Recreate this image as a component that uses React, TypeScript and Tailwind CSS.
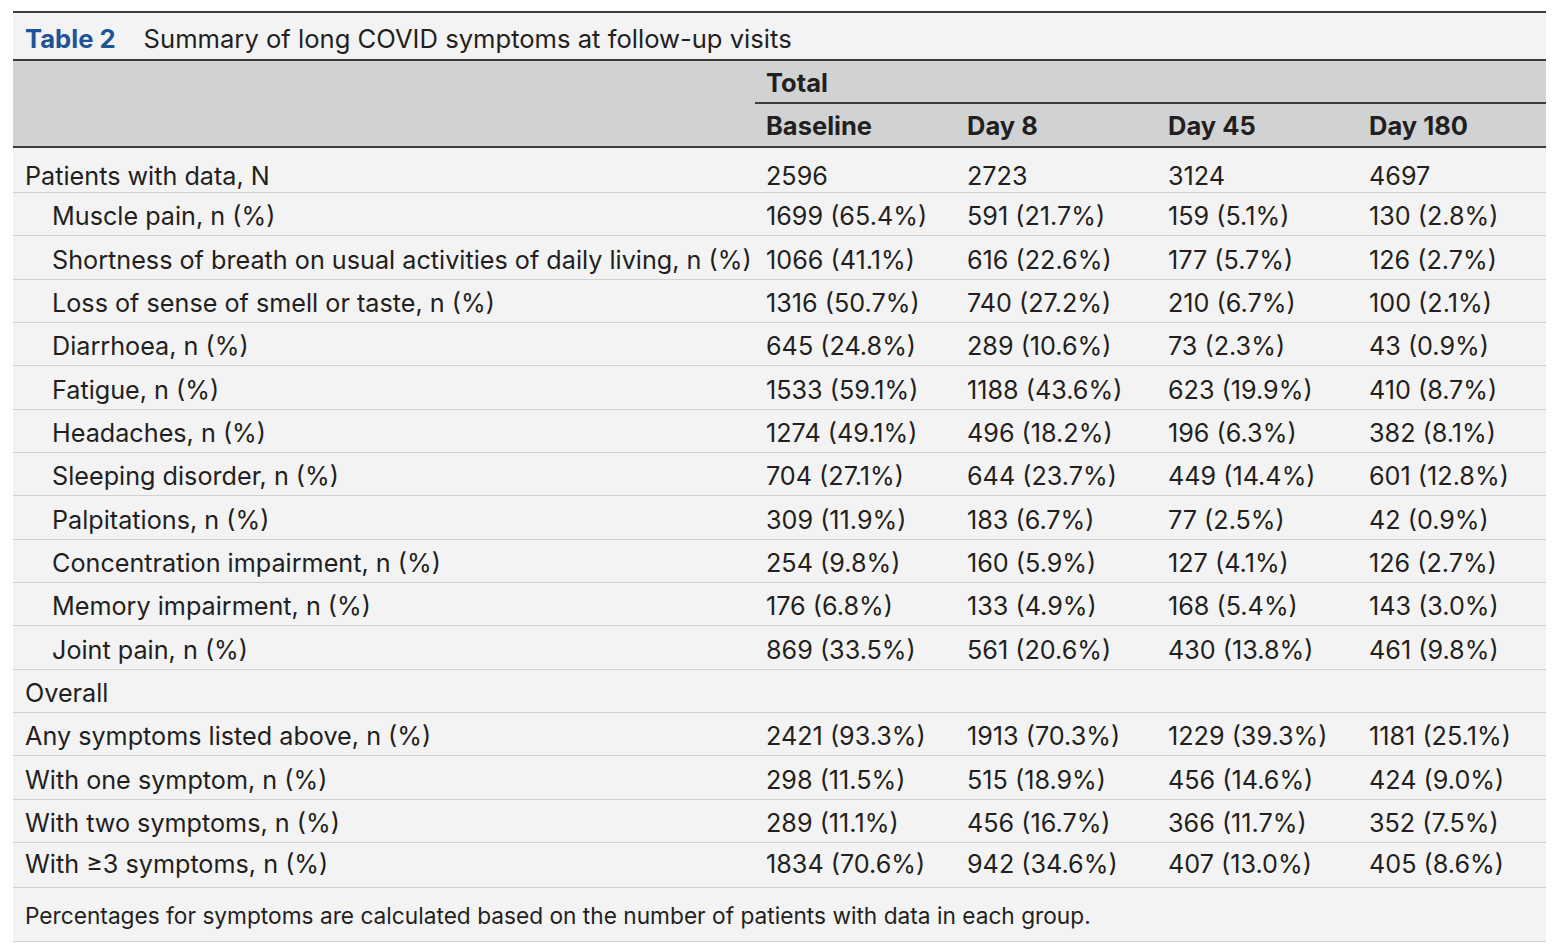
import React from 'react';

type Row = { label: string; values: string[]; indent?: boolean };

const rows: Row[] = [
  { label: 'Patients with data, N', values: ['2596', '2723', '3124', '4697'] },
  { label: 'Muscle pain, n (%)', values: ['1699 (65.4%)', '591 (21.7%)', '159 (5.1%)', '130 (2.8%)'], indent: true },
  { label: 'Shortness of breath on usual activities of daily living, n (%)', values: ['1066 (41.1%)', '616 (22.6%)', '177 (5.7%)', '126 (2.7%)'], indent: true },
  { label: 'Loss of sense of smell or taste, n (%)', values: ['1316 (50.7%)', '740 (27.2%)', '210 (6.7%)', '100 (2.1%)'], indent: true },
  { label: 'Diarrhoea, n (%)', values: ['645 (24.8%)', '289 (10.6%)', '73 (2.3%)', '43 (0.9%)'], indent: true },
  { label: 'Fatigue, n (%)', values: ['1533 (59.1%)', '1188 (43.6%)', '623 (19.9%)', '410 (8.7%)'], indent: true },
  { label: 'Headaches, n (%)', values: ['1274 (49.1%)', '496 (18.2%)', '196 (6.3%)', '382 (8.1%)'], indent: true },
  { label: 'Sleeping disorder, n (%)', values: ['704 (27.1%)', '644 (23.7%)', '449 (14.4%)', '601 (12.8%)'], indent: true },
  { label: 'Palpitations, n (%)', values: ['309 (11.9%)', '183 (6.7%)', '77 (2.5%)', '42 (0.9%)'], indent: true },
  { label: 'Concentration impairment, n (%)', values: ['254 (9.8%)', '160 (5.9%)', '127 (4.1%)', '126 (2.7%)'], indent: true },
  { label: 'Memory impairment, n (%)', values: ['176 (6.8%)', '133 (4.9%)', '168 (5.4%)', '143 (3.0%)'], indent: true },
  { label: 'Joint pain, n (%)', values: ['869 (33.5%)', '561 (20.6%)', '430 (13.8%)', '461 (9.8%)'], indent: true },
  { label: 'Overall', values: ['', '', '', ''] },
  { label: 'Any symptoms listed above, n (%)', values: ['2421 (93.3%)', '1913 (70.3%)', '1229 (39.3%)', '1181 (25.1%)'] },
  { label: 'With one symptom, n (%)', values: ['298 (11.5%)', '515 (18.9%)', '456 (14.6%)', '424 (9.0%)'] },
  { label: 'With two symptoms, n (%)', values: ['289 (11.1%)', '456 (16.7%)', '366 (11.7%)', '352 (7.5%)'] },
  { label: 'With \u22653 symptoms, n (%)', values: ['1834 (70.6%)', '942 (34.6%)', '407 (13.0%)', '405 (8.6%)'] },
];

const cols = ['Baseline', 'Day 8', 'Day 45', 'Day 180'];

export default function App() {
  return (
    <div className="min-h-screen bg-white pt-[11px] pl-[13px] pr-[10px] text-[#231f20]" style={{ fontFamily: 'Inter, "Liberation Sans", Arial, sans-serif' }}>
      <div className="bg-[#f3f3f3] border-t-2 border-[#3c3c3c]">
        {/* Caption */}
        <div className="h-[48px] flex items-center pl-[12px] pt-[7px] text-[25.6px] border-b-2 border-[#3c3c3c]">
          <span className="font-bold text-[#1d5497]">Table 2</span>
          <span className="ml-[28px]">Summary of long COVID symptoms at follow-up visits</span>
        </div>

        {/* Header */}
        <div className="bg-[#d1d2d4] flex border-b-2 border-[#3c3c3c]">
          <div className="w-[742px] shrink-0" />
          <div className="flex-1">
            <div className="h-[43px] flex items-center pl-[11px] pt-[4px] text-[25.5px] font-bold border-b-2 border-[#3c3c3c]">
              Total
            </div>
            <div className="h-[42px] flex items-center pt-[2px] text-[25.5px] font-bold">
              {cols.map((c, j) => (
                <div key={c} className={`${j === 3 ? 'flex-1' : 'w-[201px] shrink-0'} pl-[11px]`}>{c}</div>
              ))}
            </div>
          </div>
        </div>

        {/* Body */}
        {rows.map((r, i) => (
          <div
            key={r.label}
            className={`flex items-center text-[25.2px] border-b border-[#d0d0d0] ${i === 0 ? 'h-[45px] pt-[13px]' : i === rows.length - 1 ? 'h-[45px]' : 'h-[43.33px] pt-[6px]'}`}
          >
            <div className={`w-[742px] shrink-0 whitespace-nowrap ${r.indent ? 'pl-[39px]' : 'pl-[12px]'}`}>{r.label}</div>
            {r.values.map((v, j) => (
              <div key={j} className={`${j === 3 ? 'flex-1' : 'w-[201px] shrink-0'} pl-[11px] whitespace-nowrap`}>{v}</div>
            ))}
          </div>
        ))}

        {/* Footnote */}
        <div className="h-[54px] flex items-center pl-[12px] pt-[4px] text-[22.7px] border-b border-[#d0d0d0]">
          Percentages for symptoms are calculated based on the number of patients with data in each group.
        </div>
      </div>
    </div>
  );
}
